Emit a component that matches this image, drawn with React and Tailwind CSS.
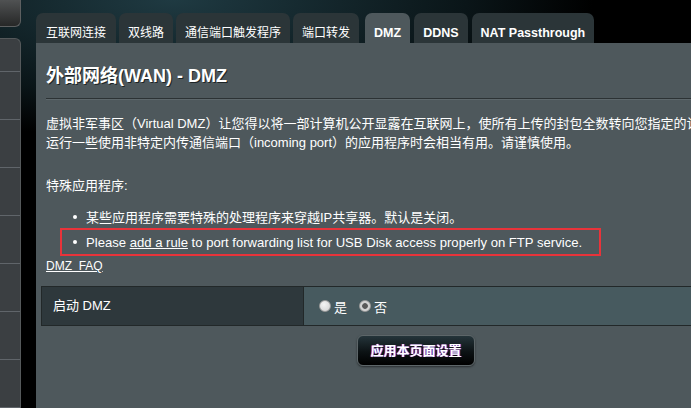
import React from "react";

const font = { fontFamily: '"Liberation Sans", Arial, "Noto Sans CJK SC", sans-serif' };

const tabs = [
  { label: "互联网连接" },
  { label: "双线路" },
  { label: "通信端口触发程序" },
  { label: "端口转发" },
  { label: "DMZ", active: true },
  { label: "DDNS" },
  { label: "NAT Passthrough" },
];

const Sidebar = () => (
  <div className="w-[21px] flex flex-col shrink-0">
    <div className="h-[37px] rounded-br-[6px] bg-[linear-gradient(#505253,#262727)] border-r border-b border-[#5d5f60]" />
    <div className="mt-[11px] flex-1 rounded-tr-[6px] bg-[#3b3f42] border-r border-t border-[#55595b] flex flex-col">
      <div className="h-[33px] border-b border-[#60656a]" />
      {[0, 1, 2, 3, 4, 5, 6].map((i) => (
        <div key={i} className="h-[48px] border-b border-[#60656a]" />
      ))}
    </div>
  </div>
);

const Radio = ({ checked }) => (
  <span
    className={
      "inline-block w-[12px] h-[12px] rounded-full border border-[#9a9a9a] " +
      (checked
        ? "bg-[radial-gradient(circle,#5a5a5a_0,#5a5a5a_35%,#cfcfcf_45%,#e6e6e6_100%)]"
        : "bg-[radial-gradient(circle_at_40%_35%,#f4f4f4,#cfcfcf)]")
    }
  />
);

export default function App() {
  return (
    <div
      className="w-[691px] h-[408px] overflow-hidden flex bg-[radial-gradient(ellipse_420px_140px_at_25%_0%,#1f3a42,#0a1518_70%,#000)] text-white"
      style={font}
    >
      <Sidebar />
      <div className="ml-[15px] flex flex-col shrink-0 w-[760px]">
        {/* tabs */}
        <div className="flex gap-[3px] pt-[13px]">
          {tabs.map((t) => (
            <div
              key={t.label}
              className={
                "h-[30px] px-[9px] pt-[14px] rounded-t-[7px] leading-none " +
                (t.active
                  ? "bg-[#4e585c] font-bold text-[12.5px] ml-[3px]"
                  : "bg-[#2b3538] " +
                    (/[A-Z]/.test(t.label) ? "font-bold text-[12.5px] ml-[1px]" : "text-[12px] first:px-[10px]"))
              }
            >
              {t.label}
            </div>
          ))}
        </div>

        {/* panel */}
        <div className="flex-1 bg-[#4e585c] flex flex-col">
          <div className="px-[10px]">
            <h1 className="pt-[22px] text-[18px] font-bold leading-[22px] [text-shadow:1px_1px_0_#1d2426]">
              外部网络(WAN) - DMZ
            </h1>
            <div className="mt-[11px] h-[2px] border-t border-[#2c3234] bg-[#5d676b]" />
            <div className="mt-[14px] text-[13px] leading-[19px] whitespace-nowrap">
              <p>虚拟非军事区（Virtual DMZ）让您得以将一部计算机公开显露在互联网上，使所有上传的封包全数转向您指定的计算机。</p>
              <p>运行一些使用非特定内传通信端口（incoming port）的应用程序时会相当有用。请谨慎使用。</p>
            </div>
            <p className="mt-[24px] text-[13px] leading-[19px]">特殊应用程序:</p>
            <ul className="mt-[11px] text-[13px] leading-[19px] whitespace-nowrap">
              <li className="flex items-center pl-[27px] h-[22px]">
                <span className="w-[4px] h-[4px] rounded-full bg-white mr-[9px]" />
                某些应用程序需要特殊的处理程序来穿越IP共享器。默认是关闭。
              </li>
              <li className="ml-[14px] w-[541px] h-[28px] border-2 border-[#e8333a] flex items-center pl-[11px] text-[13.1px]">
                <span className="w-[4px] h-[4px] rounded-full bg-white mr-[9px]" />
                <span>
                  Please <span className="underline">add a rule</span> to port forwarding list for USB Disk access
                  properly on FTP service.
                </span>
              </li>
            </ul>
            <a className="block mt-[3px] text-[12px] leading-[15px] underline text-white w-fit">
              DMZ&nbsp;&nbsp;FAQ
            </a>
          </div>

          {/* table */}
          <div className="ml-[5px] mt-[12px] h-[40px] flex border border-[#222829] text-[13px]">
            <div className="w-[262px] bg-[#2e383c] border-r border-[#222829] flex items-center pl-[11px]">
              启动 DMZ
            </div>
            <div className="flex-1 bg-[#475a5f] flex items-center pl-[15px] gap-[3px]">
              <Radio />
              <span className="mt-[3px]">是</span>
              <span className="ml-[6px]" />
              <Radio checked />
              <span className="mt-[3px]">否</span>
            </div>
          </div>

          {/* apply button */}
          <div className="mt-[9px] pl-[321px]">
            <button className="w-[118px] h-[31px] rounded-[6px] border border-[#5d6669] bg-[linear-gradient(#24343a,#0c1214_55%,#000)] text-[13px] font-bold text-white [text-shadow:1px_0_0_#3a3ad0,-1px_0_0_#b02020] shadow-[0_1px_2px_#2a2f31]">
              应用本页面设置
            </button>
          </div>
        </div>
      </div>
    </div>
  );
}
